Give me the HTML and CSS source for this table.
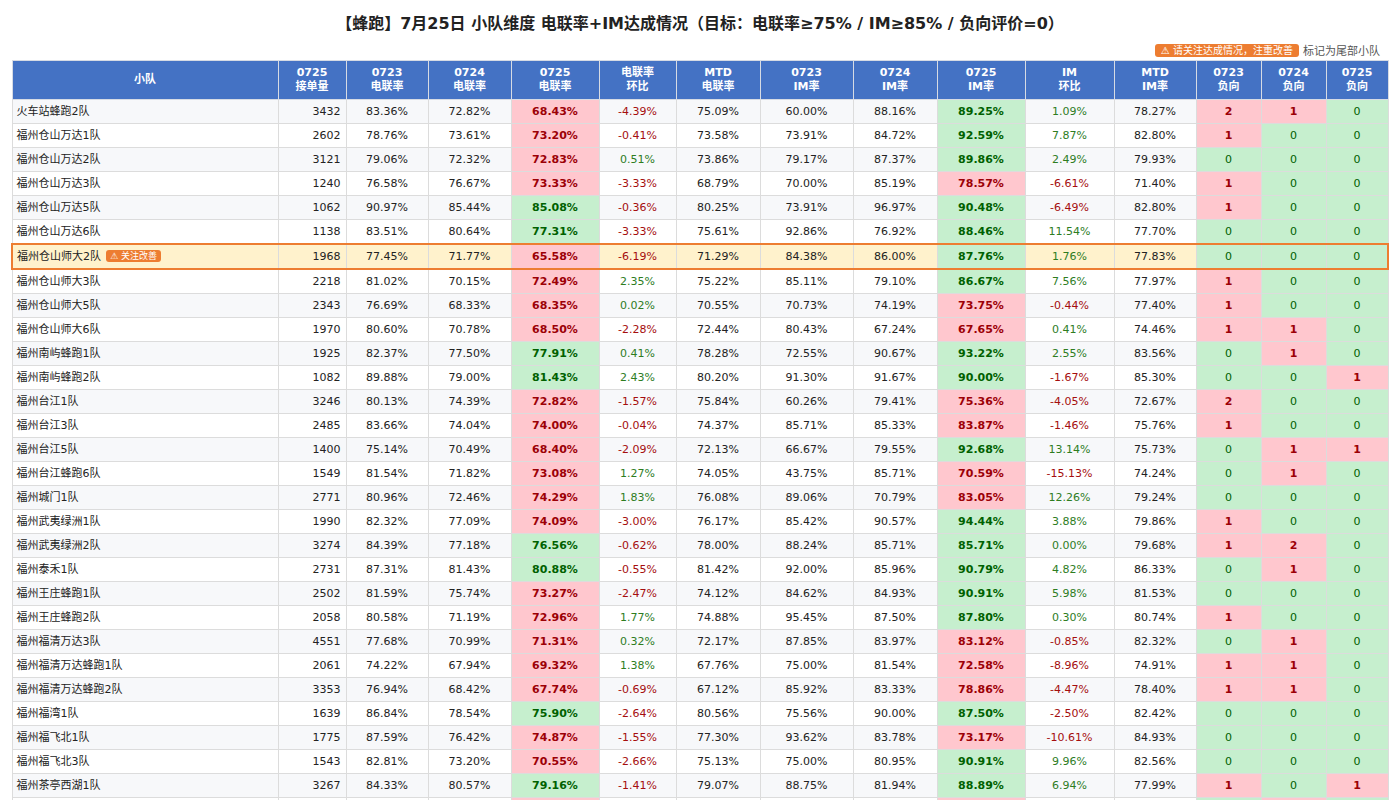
FILE: index.html
```html
<!DOCTYPE html>
<html lang="zh">
<head>
<meta charset="utf-8">
<title>小队维度 电联率+IM达成情况</title>
<link rel="stylesheet" href="styles.css">
</head>
<body>
<div class="page">
  <h1 class="title">【蜂跑】7月25日 小队维度 电联率+IM达成情况（目标：电联率≥75% / IM≥85% / 负向评价=0）</h1>
  <div class="legend">
    <span class="tag tag-lg">⚠ 请关注达成情况，注重改善</span>
    <span class="legend-text">标记为尾部小队</span>
  </div>
  <table class="grid">
    <colgroup>
      <col class="c-name"><col class="c-66"><col class="c-82"><col class="c-83"><col class="c-88"><col class="c-77"><col class="c-84"><col class="c-93"><col class="c-84"><col class="c-88"><col class="c-89"><col class="c-82"><col class="c-65"><col class="c-65"><col class="c-62">
    </colgroup>
    <thead>
      <tr>
        <th>小队</th>
        <th>0725<br>接单量</th>
        <th>0723<br>电联率</th>
        <th>0724<br>电联率</th>
        <th>0725<br>电联率</th>
        <th>电联率<br>环比</th>
        <th>MTD<br>电联率</th>
        <th>0723<br>IM率</th>
        <th>0724<br>IM率</th>
        <th>0725<br>IM率</th>
        <th>IM<br>环比</th>
        <th>MTD<br>IM率</th>
        <th>0723<br>负向</th>
        <th>0724<br>负向</th>
        <th>0725<br>负向</th>
      </tr>
    </thead>
    <tbody>
      <tr><td class="name">火车站蜂跑2队</td><td class="num">3432</td><td>83.36%</td><td>72.82%</td><td class="bad">68.43%</td><td class="dn">-4.39%</td><td>75.09%</td><td>60.00%</td><td>88.16%</td><td class="ok">89.25%</td><td class="up">1.09%</td><td>78.27%</td><td class="nb">2</td><td class="nb">1</td><td class="ng">0</td></tr>
      <tr><td class="name">福州仓山万达1队</td><td class="num">2602</td><td>78.76%</td><td>73.61%</td><td class="bad">73.20%</td><td class="dn">-0.41%</td><td>73.58%</td><td>73.91%</td><td>84.72%</td><td class="ok">92.59%</td><td class="up">7.87%</td><td>82.80%</td><td class="nb">1</td><td class="ng">0</td><td class="ng">0</td></tr>
      <tr><td class="name">福州仓山万达2队</td><td class="num">3121</td><td>79.06%</td><td>72.32%</td><td class="bad">72.83%</td><td class="up">0.51%</td><td>73.86%</td><td>79.17%</td><td>87.37%</td><td class="ok">89.86%</td><td class="up">2.49%</td><td>79.93%</td><td class="ng">0</td><td class="ng">0</td><td class="ng">0</td></tr>
      <tr><td class="name">福州仓山万达3队</td><td class="num">1240</td><td>76.58%</td><td>76.67%</td><td class="bad">73.33%</td><td class="dn">-3.33%</td><td>68.79%</td><td>70.00%</td><td>85.19%</td><td class="bad">78.57%</td><td class="dn">-6.61%</td><td>71.40%</td><td class="nb">1</td><td class="ng">0</td><td class="ng">0</td></tr>
      <tr><td class="name">福州仓山万达5队</td><td class="num">1062</td><td>90.97%</td><td>85.44%</td><td class="ok">85.08%</td><td class="dn">-0.36%</td><td>80.25%</td><td>73.91%</td><td>96.97%</td><td class="ok">90.48%</td><td class="dn">-6.49%</td><td>82.80%</td><td class="nb">1</td><td class="ng">0</td><td class="ng">0</td></tr>
      <tr><td class="name">福州仓山万达6队</td><td class="num">1138</td><td>83.51%</td><td>80.64%</td><td class="ok">77.31%</td><td class="dn">-3.33%</td><td>75.61%</td><td>92.86%</td><td>76.92%</td><td class="ok">88.46%</td><td class="up">11.54%</td><td>77.70%</td><td class="ng">0</td><td class="ng">0</td><td class="ng">0</td></tr>
      <tr class="focus"><td class="name">福州仓山师大2队<span class="tag">⚠ 关注改善</span></td><td class="num">1968</td><td>77.45%</td><td>71.77%</td><td class="bad">65.58%</td><td class="dn">-6.19%</td><td>71.29%</td><td>84.38%</td><td>86.00%</td><td class="ok">87.76%</td><td class="up">1.76%</td><td>77.83%</td><td class="ng">0</td><td class="ng">0</td><td class="ng">0</td></tr>
      <tr><td class="name">福州仓山师大3队</td><td class="num">2218</td><td>81.02%</td><td>70.15%</td><td class="bad">72.49%</td><td class="up">2.35%</td><td>75.22%</td><td>85.11%</td><td>79.10%</td><td class="ok">86.67%</td><td class="up">7.56%</td><td>77.97%</td><td class="nb">1</td><td class="ng">0</td><td class="ng">0</td></tr>
      <tr><td class="name">福州仓山师大5队</td><td class="num">2343</td><td>76.69%</td><td>68.33%</td><td class="bad">68.35%</td><td class="up">0.02%</td><td>70.55%</td><td>70.73%</td><td>74.19%</td><td class="bad">73.75%</td><td class="dn">-0.44%</td><td>77.40%</td><td class="nb">1</td><td class="ng">0</td><td class="ng">0</td></tr>
      <tr><td class="name">福州仓山师大6队</td><td class="num">1970</td><td>80.60%</td><td>70.78%</td><td class="bad">68.50%</td><td class="dn">-2.28%</td><td>72.44%</td><td>80.43%</td><td>67.24%</td><td class="bad">67.65%</td><td class="up">0.41%</td><td>74.46%</td><td class="nb">1</td><td class="nb">1</td><td class="ng">0</td></tr>
      <tr><td class="name">福州南屿蜂跑1队</td><td class="num">1925</td><td>82.37%</td><td>77.50%</td><td class="ok">77.91%</td><td class="up">0.41%</td><td>78.28%</td><td>72.55%</td><td>90.67%</td><td class="ok">93.22%</td><td class="up">2.55%</td><td>83.56%</td><td class="ng">0</td><td class="nb">1</td><td class="ng">0</td></tr>
      <tr><td class="name">福州南屿蜂跑2队</td><td class="num">1082</td><td>89.88%</td><td>79.00%</td><td class="ok">81.43%</td><td class="up">2.43%</td><td>80.20%</td><td>91.30%</td><td>91.67%</td><td class="ok">90.00%</td><td class="dn">-1.67%</td><td>85.30%</td><td class="ng">0</td><td class="ng">0</td><td class="nb">1</td></tr>
      <tr><td class="name">福州台江1队</td><td class="num">3246</td><td>80.13%</td><td>74.39%</td><td class="bad">72.82%</td><td class="dn">-1.57%</td><td>75.84%</td><td>60.26%</td><td>79.41%</td><td class="bad">75.36%</td><td class="dn">-4.05%</td><td>72.67%</td><td class="nb">2</td><td class="ng">0</td><td class="ng">0</td></tr>
      <tr><td class="name">福州台江3队</td><td class="num">2485</td><td>83.66%</td><td>74.04%</td><td class="bad">74.00%</td><td class="dn">-0.04%</td><td>74.37%</td><td>85.71%</td><td>85.33%</td><td class="bad">83.87%</td><td class="dn">-1.46%</td><td>75.76%</td><td class="nb">1</td><td class="ng">0</td><td class="ng">0</td></tr>
      <tr><td class="name">福州台江5队</td><td class="num">1400</td><td>75.14%</td><td>70.49%</td><td class="bad">68.40%</td><td class="dn">-2.09%</td><td>72.13%</td><td>66.67%</td><td>79.55%</td><td class="ok">92.68%</td><td class="up">13.14%</td><td>75.73%</td><td class="ng">0</td><td class="nb">1</td><td class="nb">1</td></tr>
      <tr><td class="name">福州台江蜂跑6队</td><td class="num">1549</td><td>81.54%</td><td>71.82%</td><td class="bad">73.08%</td><td class="up">1.27%</td><td>74.05%</td><td>43.75%</td><td>85.71%</td><td class="bad">70.59%</td><td class="dn">-15.13%</td><td>74.24%</td><td class="ng">0</td><td class="nb">1</td><td class="ng">0</td></tr>
      <tr><td class="name">福州城门1队</td><td class="num">2771</td><td>80.96%</td><td>72.46%</td><td class="bad">74.29%</td><td class="up">1.83%</td><td>76.08%</td><td>89.06%</td><td>70.79%</td><td class="bad">83.05%</td><td class="up">12.26%</td><td>79.24%</td><td class="ng">0</td><td class="ng">0</td><td class="ng">0</td></tr>
      <tr><td class="name">福州武夷绿洲1队</td><td class="num">1990</td><td>82.32%</td><td>77.09%</td><td class="bad">74.09%</td><td class="dn">-3.00%</td><td>76.17%</td><td>85.42%</td><td>90.57%</td><td class="ok">94.44%</td><td class="up">3.88%</td><td>79.86%</td><td class="nb">1</td><td class="ng">0</td><td class="ng">0</td></tr>
      <tr><td class="name">福州武夷绿洲2队</td><td class="num">3274</td><td>84.39%</td><td>77.18%</td><td class="ok">76.56%</td><td class="dn">-0.62%</td><td>78.00%</td><td>88.24%</td><td>85.71%</td><td class="ok">85.71%</td><td class="up">0.00%</td><td>79.68%</td><td class="nb">1</td><td class="nb">2</td><td class="ng">0</td></tr>
      <tr><td class="name">福州泰禾1队</td><td class="num">2731</td><td>87.31%</td><td>81.43%</td><td class="ok">80.88%</td><td class="dn">-0.55%</td><td>81.42%</td><td>92.00%</td><td>85.96%</td><td class="ok">90.79%</td><td class="up">4.82%</td><td>86.33%</td><td class="ng">0</td><td class="nb">1</td><td class="ng">0</td></tr>
      <tr><td class="name">福州王庄蜂跑1队</td><td class="num">2502</td><td>81.59%</td><td>75.74%</td><td class="bad">73.27%</td><td class="dn">-2.47%</td><td>74.12%</td><td>84.62%</td><td>84.93%</td><td class="ok">90.91%</td><td class="up">5.98%</td><td>81.53%</td><td class="ng">0</td><td class="ng">0</td><td class="ng">0</td></tr>
      <tr><td class="name">福州王庄蜂跑2队</td><td class="num">2058</td><td>80.58%</td><td>71.19%</td><td class="bad">72.96%</td><td class="up">1.77%</td><td>74.88%</td><td>95.45%</td><td>87.50%</td><td class="ok">87.80%</td><td class="up">0.30%</td><td>80.74%</td><td class="nb">1</td><td class="ng">0</td><td class="ng">0</td></tr>
      <tr><td class="name">福州福清万达3队</td><td class="num">4551</td><td>77.68%</td><td>70.99%</td><td class="bad">71.31%</td><td class="up">0.32%</td><td>72.17%</td><td>87.85%</td><td>83.97%</td><td class="bad">83.12%</td><td class="dn">-0.85%</td><td>82.32%</td><td class="ng">0</td><td class="nb">1</td><td class="ng">0</td></tr>
      <tr><td class="name">福州福清万达蜂跑1队</td><td class="num">2061</td><td>74.22%</td><td>67.94%</td><td class="bad">69.32%</td><td class="up">1.38%</td><td>67.76%</td><td>75.00%</td><td>81.54%</td><td class="bad">72.58%</td><td class="dn">-8.96%</td><td>74.91%</td><td class="nb">1</td><td class="nb">1</td><td class="ng">0</td></tr>
      <tr><td class="name">福州福清万达蜂跑2队</td><td class="num">3353</td><td>76.94%</td><td>68.42%</td><td class="bad">67.74%</td><td class="dn">-0.69%</td><td>67.12%</td><td>85.92%</td><td>83.33%</td><td class="bad">78.86%</td><td class="dn">-4.47%</td><td>78.40%</td><td class="nb">1</td><td class="nb">1</td><td class="ng">0</td></tr>
      <tr><td class="name">福州福湾1队</td><td class="num">1639</td><td>86.84%</td><td>78.54%</td><td class="ok">75.90%</td><td class="dn">-2.64%</td><td>80.56%</td><td>75.56%</td><td>90.00%</td><td class="ok">87.50%</td><td class="dn">-2.50%</td><td>82.42%</td><td class="ng">0</td><td class="ng">0</td><td class="ng">0</td></tr>
      <tr><td class="name">福州福飞北1队</td><td class="num">1775</td><td>87.59%</td><td>76.42%</td><td class="bad">74.87%</td><td class="dn">-1.55%</td><td>77.30%</td><td>93.62%</td><td>83.78%</td><td class="bad">73.17%</td><td class="dn">-10.61%</td><td>84.93%</td><td class="ng">0</td><td class="ng">0</td><td class="ng">0</td></tr>
      <tr><td class="name">福州福飞北3队</td><td class="num">1543</td><td>82.81%</td><td>73.20%</td><td class="bad">70.55%</td><td class="dn">-2.66%</td><td>75.13%</td><td>75.00%</td><td>80.95%</td><td class="ok">90.91%</td><td class="up">9.96%</td><td>82.56%</td><td class="ng">0</td><td class="ng">0</td><td class="ng">0</td></tr>
      <tr><td class="name">福州茶亭西湖1队</td><td class="num">3267</td><td>84.33%</td><td>80.57%</td><td class="ok">79.16%</td><td class="dn">-1.41%</td><td>79.07%</td><td>88.75%</td><td>81.94%</td><td class="ok">88.89%</td><td class="up">6.94%</td><td>77.99%</td><td class="nb">1</td><td class="ng">0</td><td class="nb">1</td></tr>
      <tr><td class="name">福州茶亭西湖2队</td><td class="num">2186</td><td>79.42%</td><td>75.18%</td><td class="bad">72.05%</td><td class="dn">-3.13%</td><td>75.36%</td><td>83.33%</td><td>86.21%</td><td class="bad">80.00%</td><td class="dn">-6.21%</td><td>80.12%</td><td class="ng">0</td><td class="nb">1</td><td class="ng">0</td></tr>
    </tbody>
  </table>
</div>
</body>
</html>
```

FILE: styles.css
```css
html, body {
  margin: 0;
  padding: 0;
  background: #ffffff;
}

body {
  font-family: "DejaVu Sans", "Noto Sans CJK SC", sans-serif;
  color: #222222;
}

.page {
  padding: 12px 11px 0 11px;
}

.title {
  margin: 0;
  font-size: 16px;
  line-height: 24px;
  font-weight: bold;
  text-align: center;
  color: #222222;
}

.legend {
  display: flex;
  justify-content: flex-end;
  align-items: center;
  gap: 4px;
  margin-top: 6px;
  margin-bottom: 2px;
  height: 16px;
  padding-right: 9px;
}

.legend-text {
  font-size: 11px;
  color: #555555;
}

.tag {
  display: inline-block;
  background: #ed7d31;
  color: #ffffff;
  font-size: 9px;
  line-height: 12px;
  padding: 0 4px;
  border-radius: 3px;
  margin-left: 5px;
  vertical-align: 1px;
}

.tag-lg {
  font-size: 10px;
  line-height: 13px;
  padding: 0 6px;
  margin-left: 0;
}

.grid {
  width: 1377px;
  table-layout: fixed;
  border-collapse: collapse;
  font-size: 11px;
}

.c-name { width: 266px; }
.c-66 { width: 68px; }
.c-82 { width: 82px; }
.c-83 { width: 83px; }
.c-88 { width: 88px; }
.c-77 { width: 77px; }
.c-84 { width: 84px; }
.c-93 { width: 93px; }
.c-89 { width: 89px; }
.c-65 { width: 65px; }
.c-62 { width: 62px; }

.grid th {
  background: #4472c4;
  color: #ffffff;
  font-weight: bold;
  font-size: 11px;
  line-height: 14px;
  height: 38px;
  padding: 0 4px;
  border: 1px solid #d6dbe4;
  text-align: center;
  vertical-align: middle;
}

.grid td {
  height: 23px;
  padding: 0 5px;
  border: 1px solid #dcdcdc;
  text-align: center;
  vertical-align: middle;
  line-height: 14px;
  white-space: nowrap;
}

.grid tbody tr:nth-child(odd) td {
  background: #f7f8fa;
}

.grid tbody tr:nth-child(even) td {
  background: #ffffff;
}

.grid td.name {
  text-align: left;
  padding-left: 4px;
}

.grid td.num {
  text-align: right;
}

.grid td.dn {
  color: #a50e0e;
}

.grid td.up {
  color: #2e7d1f;
}

.grid tbody tr td.bad {
  background: #ffc7ce;
  color: #9c0006;
  font-weight: bold;
}

.grid tbody tr td.ok {
  background: #c6efce;
  color: #006100;
  font-weight: bold;
}

.grid tbody tr td.nb {
  background: #ffc7ce;
  color: #9c0006;
  font-weight: bold;
}

.grid tbody tr td.ng {
  background: #c6efce;
  color: #006100;
}

.grid tbody tr.focus td {
  background: #fff2cc;
  border-top: 2px solid #ed7d31;
  border-bottom: 2px solid #ed7d31;
}

.grid tbody tr.focus td.bad,
.grid tbody tr.focus td.nb {
  background: #ffc7ce;
}

.grid tbody tr.focus td.ok,
.grid tbody tr.focus td.ng {
  background: #c6efce;
}

.grid tbody tr.focus td:first-child {
  border-left: 2px solid #ed7d31;
}

.grid tbody tr.focus td:last-child {
  border-right: 2px solid #ed7d31;
}
```
